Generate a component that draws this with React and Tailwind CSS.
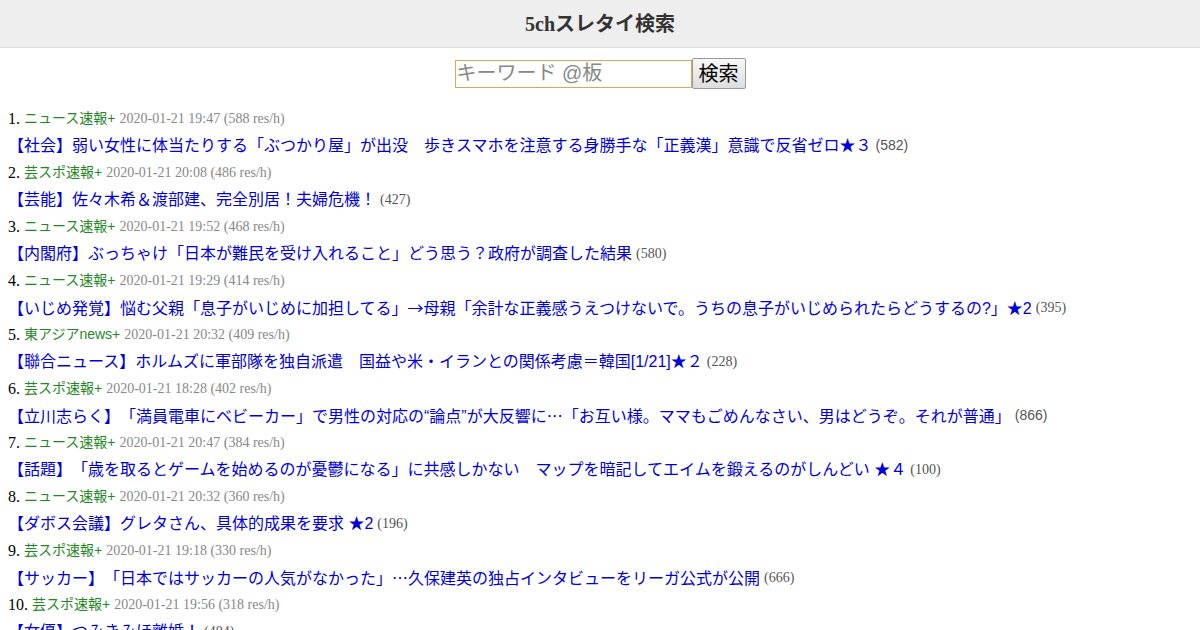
const threads = [
  { board: 'ニュース速報+', date: '2020-01-21 19:47', rate: 588, title: '【社会】弱い女性に体当たりする「ぶつかり屋」が出没　歩きスマホを注意する身勝手な「正義漢」意識で反省ゼロ★３ ', count: 582, sansCount: true },
  { board: '芸スポ速報+', date: '2020-01-21 20:08', rate: 486, title: '【芸能】佐々木希＆渡部建、完全別居！夫婦危機！', count: 427 },
  { board: 'ニュース速報+', date: '2020-01-21 19:52', rate: 468, title: '【内閣府】ぶっちゃけ「日本が難民を受け入れること」どう思う？政府が調査した結果', count: 580 },
  { board: 'ニュース速報+', date: '2020-01-21 19:29', rate: 414, title: '【いじめ発覚】悩む父親「息子がいじめに加担してる」→母親「余計な正義感うえつけないで。うちの息子がいじめられたらどうするの?」★2', count: 395 },
  { board: '東アジアnews+', date: '2020-01-21 20:32', rate: 409, title: '【聯合ニュース】ホルムズに軍部隊を独自派遣　国益や米・イランとの関係考慮＝韓国[1/21]★２', count: 228 },
  { board: '芸スポ速報+', date: '2020-01-21 18:28', rate: 402, title: '【立川志らく】「満員電車にベビーカー」で男性の対応の“論点”が大反響に…「お互い様。ママもごめんなさい、男はどうぞ。それが普通」 ', count: 866, sansCount: true },
  { board: 'ニュース速報+', date: '2020-01-21 20:47', rate: 384, title: '【話題】「歳を取るとゲームを始めるのが憂鬱になる」に共感しかない　マップを暗記してエイムを鍛えるのがしんどい ★４', count: 100 },
  { board: 'ニュース速報+', date: '2020-01-21 20:32', rate: 360, title: '【ダボス会議】グレタさん、具体的成果を要求 ★2', count: 196 },
  { board: '芸スポ速報+', date: '2020-01-21 19:18', rate: 330, title: '【サッカー】「日本ではサッカーの人気がなかった」…久保建英の独占インタビューをリーガ公式が公開', count: 666 },
  { board: '芸スポ速報+', date: '2020-01-21 19:56', rate: 318, title: '【女優】つみきみほ離婚！', count: 404 },
];

const serif = "font-['Liberation_Serif','Noto_Sans_CJK_JP',serif]";
const sans = "font-['Liberation_Sans','Noto_Sans_CJK_JP',sans-serif]";

// arrows and ellipses come out fullwidth in the reference
function Title({ text }) {
  return text.split(/([→…])/).map((part, i) =>
    part === '→' || part === '…' ? (
      <span key={i} className="font-['Noto_Sans_CJK_JP',sans-serif]">{part}</span>
    ) : (
      part
    )
  );
}

export default function App() {
  return (
    <div className="min-h-screen bg-white font-['Liberation_Serif','Noto_Sans_CJK_JP',serif] text-black [text-spacing-trim:space-all]">
      <header className="h-[48px] bg-[#eeeeee] border-b border-[#dddddd] flex items-center justify-center">
        <h1 className="text-[20px] font-bold text-[#333333] leading-none">5chスレタイ検索</h1>
      </header>

      <div className="flex justify-center items-center mt-[10px]">
        <input
          type="text"
          placeholder="キーワード @板"
          className={`w-[237px] h-[28px] border border-[#d4aa55] px-[1px] text-[20px] leading-none outline-none placeholder:text-[#888888] ${sans}`}
        />
        <button className={`h-[31px] px-[6px] border border-[#999999] rounded-[2px] bg-gradient-to-b from-[#f8f8f8] to-[#dddddd] text-[20px] leading-none text-black ${sans}`}>
          検索
        </button>
      </div>

      <ol className="mt-[16px] px-[8px]">
        {threads.map((t, i) => (
          <li key={i}>
            <div className="h-[27px] flex items-center gap-[4px] whitespace-nowrap">
              <span className={`text-[16px] ${serif}`}>{i + 1}.</span>
              <span className={`text-[14px] text-[#1f8a1f] ${sans}`}>{t.board}</span>
              <span className={`text-[14px] text-[#888888] ${serif}`}>{t.date} ({t.rate} res/h)</span>
            </div>
            <div className="h-[27px] flex items-center whitespace-nowrap">
              <a href="#" className={`text-[16px] text-[#0000dd] ${sans}`}>
                <Title text={t.title} />
              </a>
              <span className={`ml-[4px] text-[14px] text-[#555555] ${t.sansCount ? sans : serif}`}>({t.count})</span>
            </div>
          </li>
        ))}
      </ol>
    </div>
  );
}
